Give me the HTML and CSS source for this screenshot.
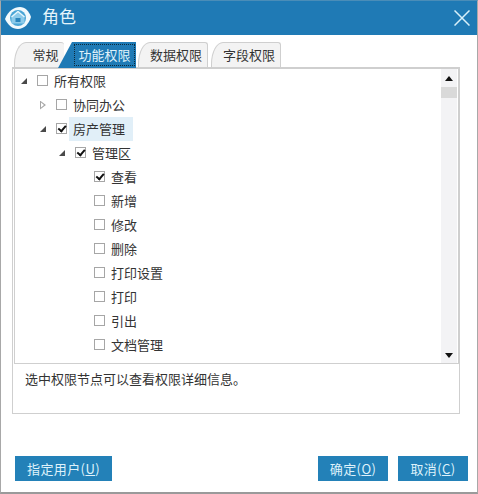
FILE: index.html
```html
<!DOCTYPE html>
<html lang="zh">
<head>
    <meta charset="UTF-8">
    <title>角色</title>
    <link rel="stylesheet" href="styles.css">
</head>
<body>
    <div class="dialog">
        <div class="title-bar">
            <svg class="logo" width="26" height="22" viewBox="0 0 26 22">
                <path d="M0 12C3 4 9 0 15 0c5 0 9 4 11 10-2 7-7 12-13 12C7 22 3 18 0 12z" fill="#f2fafd"/>
                <circle cx="13" cy="11" r="8" fill="#4aa6d6"/>
                <path d="M13 4.500l6.500 5.500v6.500h-13V10z" fill="#8ccbea"/>
                <path d="M13 4.500l6.500 5.500M13 4.500L6.500 10" stroke="#e6f6fc" stroke-width="1.500" fill="none"/>
                <rect x="10.500" y="11" width="5" height="4" fill="#2a86bd"/>
            </svg>
            <span class="title-text">角色</span>
            <svg class="close-icon" width="16" height="16" viewBox="0 0 16 16">
                <path d="M0.500 0.500l15 15M15.500 0.500l-15 15" stroke="#d8f0fa" stroke-width="1.500" fill="none"/>
            </svg>
        </div>

        <div class="content">
            <div class="tabs">
                <div class="tab tab-first">常规</div>
                <div class="tab tab-active"><span class="tab-label">功能权限</span></div>
                <div class="tab">数据权限</div>
                <div class="tab">字段权限</div>
            </div>

            <div class="panel">
                <div class="tree-wrap">
                    <ul class="tree">
                        <li class="row level-0"><span class="arrow open"></span><span class="check"></span><span class="label">所有权限</span></li>
                        <li class="row level-1"><span class="arrow closed"></span><span class="check"></span><span class="label">协同办公</span></li>
                        <li class="row level-1"><span class="arrow open"></span><span class="check on"></span><span class="label selected">房产管理</span></li>
                        <li class="row level-2"><span class="arrow open"></span><span class="check on"></span><span class="label">管理区</span></li>
                        <li class="row level-3"><span class="arrow none"></span><span class="check on"></span><span class="label">查看</span></li>
                        <li class="row level-3"><span class="arrow none"></span><span class="check"></span><span class="label">新增</span></li>
                        <li class="row level-3"><span class="arrow none"></span><span class="check"></span><span class="label">修改</span></li>
                        <li class="row level-3"><span class="arrow none"></span><span class="check"></span><span class="label">删除</span></li>
                        <li class="row level-3"><span class="arrow none"></span><span class="check"></span><span class="label">打印设置</span></li>
                        <li class="row level-3"><span class="arrow none"></span><span class="check"></span><span class="label">打印</span></li>
                        <li class="row level-3"><span class="arrow none"></span><span class="check"></span><span class="label">引出</span></li>
                        <li class="row level-3"><span class="arrow none"></span><span class="check"></span><span class="label">文档管理</span></li>
                    </ul>
                    <div class="scrollbar">
                        <span class="scroll-up"></span>
                        <span class="scroll-thumb"></span>
                        <span class="scroll-down"></span>
                    </div>
                </div>
                <div class="info">选中权限节点可以查看权限详细信息。</div>
            </div>

            <div class="actions">
                <button class="btn btn-user">指定用户(<u>U</u>)</button>
                <div class="actions-right">
                    <button class="btn">确定(<u>O</u>)</button>
                    <button class="btn">取消(<u>C</u>)</button>
                </div>
            </div>
        </div>
    </div>
</body>
</html>
```

FILE: styles.css
```css
html, body {
    margin: 0;
    padding: 0;
}
body {
    width: 478px;
    height: 494px;
    overflow: hidden;
    font-family: "Noto Sans CJK SC", "Liberation Sans", sans-serif;
    font-size: 13px;
    color: #333;
    background: #fff;
}
.dialog {
    box-sizing: border-box;
    width: 478px;
    height: 494px;
    border: 1px solid #a8a8a8;
    border-top: 1px solid #4a8db8;
    border-bottom: 2px solid #9a9a9a;
    display: flex;
    flex-direction: column;
}
.title-bar {
    height: 34px;
    flex: none;
    background: #1f7ab5;
    display: flex;
    align-items: center;
    padding: 0 7px 0 4px;
}
.logo {
    flex: none;
}
.title-text {
    margin-left: 11px;
    font-size: 17px;
    line-height: 30px;
    height: 34px;
    color: #e4f4fb;
}
.close-icon {
    margin-left: auto;
    margin-top: -1px;
}
.content {
    flex: 1;
    display: flex;
    flex-direction: column;
    padding: 7px 17px 10px 11px;
}
.tabs {
    display: flex;
    height: 25px;
    padding-left: 2px;
}
.tab {
    box-sizing: border-box;
    height: 25px;
    padding: 2px 0 0 6px;
    margin-right: 3px;
    width: 70px;
    text-align: center;
    background: #f3f3f3;
    border: 1px solid #cfcfcf;
    border-bottom: none;
    border-radius: 12px 3px 0 0 / 22px 3px 0 0;
    line-height: 20px;
}
.tab-first {
    width: 50px;
    margin-right: -6px;
    padding-left: 12px;
    border-right: none;
}
.tab-active {
    width: 78px;
    height: 26px;
    margin-right: 2px;
    border: none;
    color: #dff2fb;
    background: #1f7ab5;
    border-radius: 0;
    padding: 2px 1px 2px 16px;
    clip-path: polygon(14px 0, 100% 0, 100% 100%, 0 100%);
    position: relative;
}
.tab-label {
    display: block;
    height: 20px;
    line-height: 20px;
    border: 1px dotted #0c2a3a;
}
.panel {
    box-sizing: border-box;
    height: 347px;
    width: 448px;
    border: 1px solid #cfcfcf;
    border-top: 2px solid #cfcfcf;
    display: flex;
    flex-direction: column;
}
.tree-wrap {
    display: flex;
    height: 295px;
    flex: none;
    box-sizing: border-box;
    border-bottom: 1px solid #cfcfcf;
    margin-left: 1px;
    border-left: 1px solid #cfcfcf;
    border-right: 1px solid #cfcfcf;
}
.tree {
    flex: 1;
    list-style: none;
    margin: 0;
    padding: 0;
}
.row {
    display: flex;
    align-items: center;
    height: 24px;
}
.level-0 { padding-left: 6px; }
.level-1 { padding-left: 25px; }
.level-2 { padding-left: 44px; }
.level-3 { padding-left: 63px; }
.arrow {
    flex: none;
    box-sizing: border-box;
    width: 6px;
    height: 6px;
    margin-right: 10px;
}
.arrow.open {
    background: #4a4a4a;
    clip-path: polygon(100% 0, 100% 100%, 0 100%);
}
.arrow.closed {
    height: 9px;
    background: #a8a8a8;
    clip-path: polygon(0 0, 100% 50%, 0 100%, 0 0, 1px 2px, 1px 7px, 4px 4.500px, 1px 2px);
}
.check {
    flex: none;
    box-sizing: border-box;
    width: 11px;
    height: 11px;
    margin: -1px 2px 0 0;
    border: 1px solid #a6a6a6;
    background: #fff;
    position: relative;
}
.check.on::after {
    content: "";
    position: absolute;
    left: 1px;
    top: 0;
    width: 6px;
    height: 3px;
    border-left: 2px solid #111;
    border-bottom: 2px solid #111;
    transform: rotate(-50deg) translate(-1px, 1px);
}
.label {
    padding: 0 2px 0 4px;
    height: 24px;
    line-height: 23px;
    white-space: nowrap;
}
.label.selected {
    background: #e1eff8;
    padding-right: 8px;
}
.scrollbar {
    flex: none;
    width: 16px;
    margin-right: 1px;
    background: #f3f3f5;
    position: relative;
}
.scroll-up, .scroll-down {
    position: absolute;
    left: 4px;
    width: 0;
    height: 0;
    border-left: 4px solid transparent;
    border-right: 4px solid transparent;
}
.scroll-up {
    top: 7px;
    border-bottom: 5px solid #111;
}
.scroll-down {
    bottom: 5px;
    border-top: 5px solid #111;
}
.scroll-thumb {
    position: absolute;
    left: 0;
    top: 18px;
    width: 16px;
    height: 11px;
    background: #d9d9d9;
}
.info {
    padding: 5px 0 0 12px;
    line-height: 20px;
}
.actions {
    display: flex;
    justify-content: space-between;
    margin-top: 42px;
    padding-left: 3px;
    margin-right: -8px;
}
.actions-right {
    display: flex;
    gap: 10px;
}
.btn {
    box-sizing: border-box;
    width: 70px;
    height: 25px;
    padding: 0;
    border: none;
    background: #2381b8;
    color: #dff2fb;
    font-family: inherit;
    font-size: 13px;
    letter-spacing: 0.4px;
    line-height: 25px;
}
.btn-user {
    width: 97px;
}
```
